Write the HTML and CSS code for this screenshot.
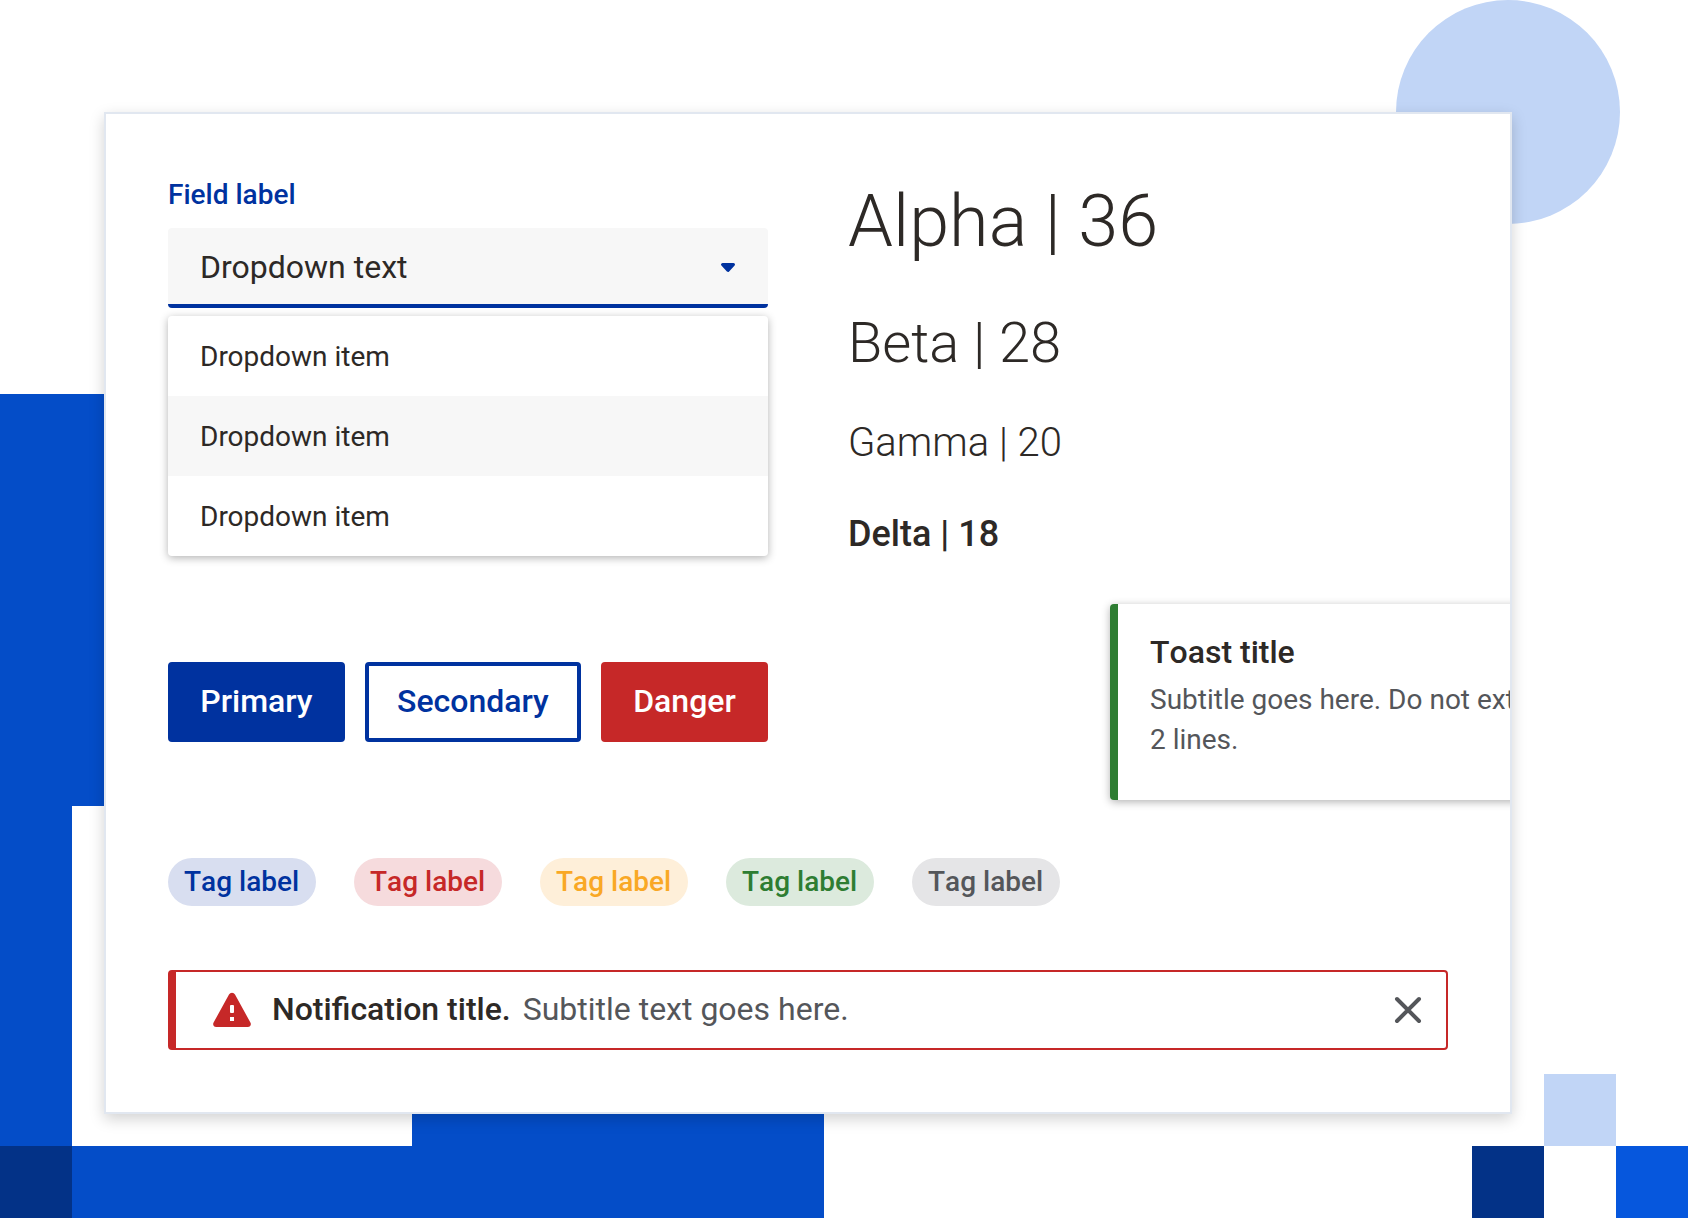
FILE: index.html
```html
<!DOCTYPE html>
<html lang="en">
<head>
  <meta charset="utf-8">
  <meta name="viewport" content="width=device-width, initial-scale=1">
  <title>Component overview</title>
  <link rel="stylesheet" href="styles.css">
</head>
<body>
  <div class="stage">
    <div class="shapes" aria-hidden="true">
      <span class="shape shape-circle"></span>
      <span class="shape shape-block-left"></span>
      <span class="shape shape-column"></span>
      <span class="shape shape-block-bottom"></span>
      <span class="shape shape-strip"></span>
      <span class="shape shape-corner"></span>
      <span class="shape shape-pixel-light"></span>
      <span class="shape shape-pixel-dark"></span>
      <span class="shape shape-pixel-bright"></span>
    </div>

    <main class="card">
      <div class="overview">
        <section class="controls">
          <div class="field">
            <label class="field-label" for="dropdown">Field label</label>
            <div class="select">
              <select class="select-control" id="dropdown">
                <option>Dropdown text</option>
              </select>
              <svg class="select-arrow" viewBox="0 0 16 10" aria-hidden="true">
                <path d="M2.500 1.500h11L8 7.500z"/>
              </svg>
            </div>
            <ul class="menu">
              <li class="menu-item">Dropdown item</li>
              <li class="menu-item menu-item-active">Dropdown item</li>
              <li class="menu-item">Dropdown item</li>
            </ul>
          </div>
          <div class="buttons">
            <button class="button button-primary" type="button">Primary</button>
            <button class="button button-secondary" type="button">Secondary</button>
            <button class="button button-danger" type="button">Danger</button>
          </div>
        </section>

        <section class="type">
          <h1 class="alpha">Alpha | 36</h1>
          <h2 class="beta">Beta | 28</h2>
          <h3 class="gamma">Gamma | 20</h3>
          <h4 class="delta">Delta | 18</h4>
          <div class="toast" role="status">
            <p class="toast-title">Toast title</p>
            <p class="toast-text">Subtitle goes here. Do not extend past 2 lines.</p>
          </div>
        </section>
      </div>

      <div class="tags">
        <span class="tag tag-blue">Tag label</span>
        <span class="tag tag-red">Tag label</span>
        <span class="tag tag-yellow">Tag label</span>
        <span class="tag tag-green">Tag label</span>
        <span class="tag tag-grey">Tag label</span>
      </div>

      <div class="notification" role="alert">
        <svg class="notification-icon" viewBox="0 0 40 36" aria-hidden="true">
          <path class="warning-shape" d="M17 2.600a3.400 3.400 0 0 1 6 0L38.400 30.500c1.200 2.300-.2 4.500-2.600 4.500H4.200c-2.400 0-3.800-2.200-2.600-4.500z"/>
          <rect class="warning-mark" x="18" y="13" width="4" height="8" rx="1"/>
          <rect class="warning-mark" x="18" y="25" width="4" height="4"/>
        </svg>
        <p class="notification-text"><strong class="notification-title">Notification title.</strong> <span>Subtitle text goes here.</span></p>
        <button class="close" type="button" aria-label="Close">
          <svg class="close-icon" viewBox="0 0 28 28" aria-hidden="true">
            <path d="M3 3l22 22M25 3L3 25"/>
          </svg>
        </button>
      </div>
    </main>
  </div>
</body>
</html>
```

FILE: styles.css
```css
*,
*::before,
*::after {
  box-sizing: border-box;
}

:root {
  --blue: #00329f;
  --red: #c62828;
  --green: #2e7d32;
  --ink: #2d2926;
  --grey: #54565a;
  --field: #f7f7f7;
  --brand: #044dc8;
  --navy: #033287;
  --sky: #c1d5f6;
}

body,
h1,
h2,
h3,
h4,
p,
ul {
  margin: 0;
  padding: 0;
}

body {
  background: #fff;
  color: var(--ink);
  font-family: Roboto, "Liberation Sans", sans-serif;
  font-size: 28px;
  line-height: 40px;
}

.stage {
  position: relative;
  min-height: 100vh;
  padding: 112px 176px 104px 104px;
  overflow: hidden;
}

/* Decorative shapes behind the card */
.shape {
  position: absolute;
  width: 72px;
  height: 72px;
}

.shape-circle {
  top: 0;
  right: 68px;
  width: 224px;
  height: 224px;
  border-radius: 50%;
  background: var(--sky);
}

.shape-block-left {
  bottom: 412px;
  left: 0;
  width: 412px;
  height: 412px;
  background: var(--brand);
}

.shape-column {
  bottom: 72px;
  left: 0;
  height: 340px;
  background: var(--brand);
}

.shape-block-bottom {
  bottom: 0;
  left: 412px;
  width: 412px;
  height: 412px;
  background: var(--brand);
}

.shape-strip {
  bottom: 0;
  left: 72px;
  width: 340px;
  background: var(--brand);
}

.shape-corner {
  bottom: 0;
  left: 0;
  background: var(--navy);
}

.shape-pixel-light {
  right: 72px;
  bottom: 72px;
  background: var(--sky);
}

.shape-pixel-dark {
  right: 144px;
  bottom: 0;
  background: var(--navy);
}

.shape-pixel-bright {
  right: 0;
  bottom: 0;
  background: #0657dd;
}

/* Card */
.card {
  position: relative;
  padding: 62px;
  overflow: hidden;
  border: 2px solid #e1e7f0;
  background: #fff;
  box-shadow: 0 5px 14px rgba(0, 0, 0, 0.18);
}

.overview {
  display: grid;
  grid-template-columns: 600px minmax(0, 1fr);
  column-gap: 80px;
}

/* Dropdown */
.field {
  display: flex;
  flex-direction: column;
}

.field-label {
  margin-bottom: 14px;
  color: var(--blue);
  font-weight: 500;
  line-height: 38px;
}

.select {
  display: grid;
  align-items: center;
}

.select-control,
.select-arrow {
  grid-area: 1 / 1;
}

.select-control {
  width: 100%;
  height: 80px;
  padding: 2px 32px 0;
  border: 0;
  border-bottom: 4px solid var(--blue);
  border-radius: 4px;
  appearance: none;
  background: var(--field);
  color: var(--ink);
  font: inherit;
  font-size: 32px;
}

.select-arrow {
  justify-self: end;
  width: 16px;
  height: 10px;
  margin-right: 32px;
  fill: var(--blue);
  stroke: var(--blue);
  stroke-width: 3;
  stroke-linejoin: round;
  pointer-events: none;
}

.menu {
  margin-top: 8px;
  overflow: hidden;
  border-radius: 4px;
  background: #fff;
  box-shadow: 0 2px 8px rgba(0, 0, 0, 0.3);
  list-style: none;
}

.menu-item {
  padding: 21px 32px 19px;
}

.menu-item-active {
  background: var(--field);
}

/* Buttons */
.buttons {
  display: flex;
  gap: 20px;
  margin-top: 106px;
}

.button {
  flex-grow: 1;
  height: 80px;
  padding: 0 28px 3px;
  border: 4px solid transparent;
  border-radius: 4px;
  font: inherit;
  font-size: 32px;
  font-weight: 500;
}

.button-primary {
  border-color: var(--blue);
  background: var(--blue);
  color: #fff;
}

.button-secondary {
  border-color: var(--blue);
  background: #fff;
  color: var(--blue);
}

.button-danger {
  border-color: var(--red);
  background: var(--red);
  color: #fff;
}

/* Type scale */
.type {
  display: flex;
  flex-direction: column;
  gap: 40px;
}

.alpha {
  font-size: 72px;
  font-weight: 300;
  line-height: 92px;
}

.beta {
  font-size: 56px;
  font-weight: 300;
  line-height: 70px;
}

.gamma {
  font-size: 40px;
  font-weight: 300;
  line-height: 50px;
}

.delta {
  font-size: 36px;
  font-weight: 500;
  line-height: 52px;
}

/* Toast, sliding in from the card's right edge */
.toast {
  align-self: flex-end;
  width: 560px;
  margin-top: 4px;
  margin-right: -222px;
  padding: 28px 32px 40px;
  border-left: 8px solid var(--green);
  border-radius: 4px;
  background: #fff;
  box-shadow: 0 2px 8px rgba(0, 0, 0, 0.3);
}

.toast-title {
  margin-bottom: 8px;
  font-size: 32px;
  font-weight: 500;
  font-kerning: none;
}

.toast-text {
  color: var(--grey);
}

/* Tags */
.tags {
  display: flex;
  flex-wrap: wrap;
  gap: 38px;
  margin-top: 58px;
}

.tag {
  min-width: 148px;
  padding: 4px 16px;
  border-radius: 24px;
  font-weight: 500;
  font-kerning: none;
}

.tag-blue {
  background: #d8def0;
  color: var(--blue);
}

.tag-red {
  background: #f6dbdd;
  color: var(--red);
}

.tag-yellow {
  background: #feefd9;
  color: #f9a825;
}

.tag-green {
  background: #dceadd;
  color: var(--green);
}

.tag-grey {
  background: #e5e5e7;
  color: var(--grey);
}

/* Notification */
.notification {
  display: flex;
  align-items: center;
  height: 80px;
  margin-top: 64px;
  padding: 0 24px 0 36px;
  border: 2px solid var(--red);
  border-left-width: 8px;
  border-radius: 4px;
  font-size: 32px;
}

.notification-icon {
  flex: none;
  width: 40px;
  height: 36px;
}

.warning-shape {
  fill: var(--red);
}

.warning-mark {
  fill: #fff;
}

.notification-text {
  flex: 1;
  margin-left: 20px;
  padding-bottom: 2px;
  color: var(--grey);
}

.notification-title {
  margin-right: 4px;
  color: var(--ink);
  font-weight: 500;
}

.close {
  display: flex;
  padding: 0;
  border: 0;
  background: none;
}

.close-icon {
  width: 28px;
  height: 28px;
  fill: none;
  stroke: var(--grey);
  stroke-width: 4;
  stroke-linecap: round;
}
```
